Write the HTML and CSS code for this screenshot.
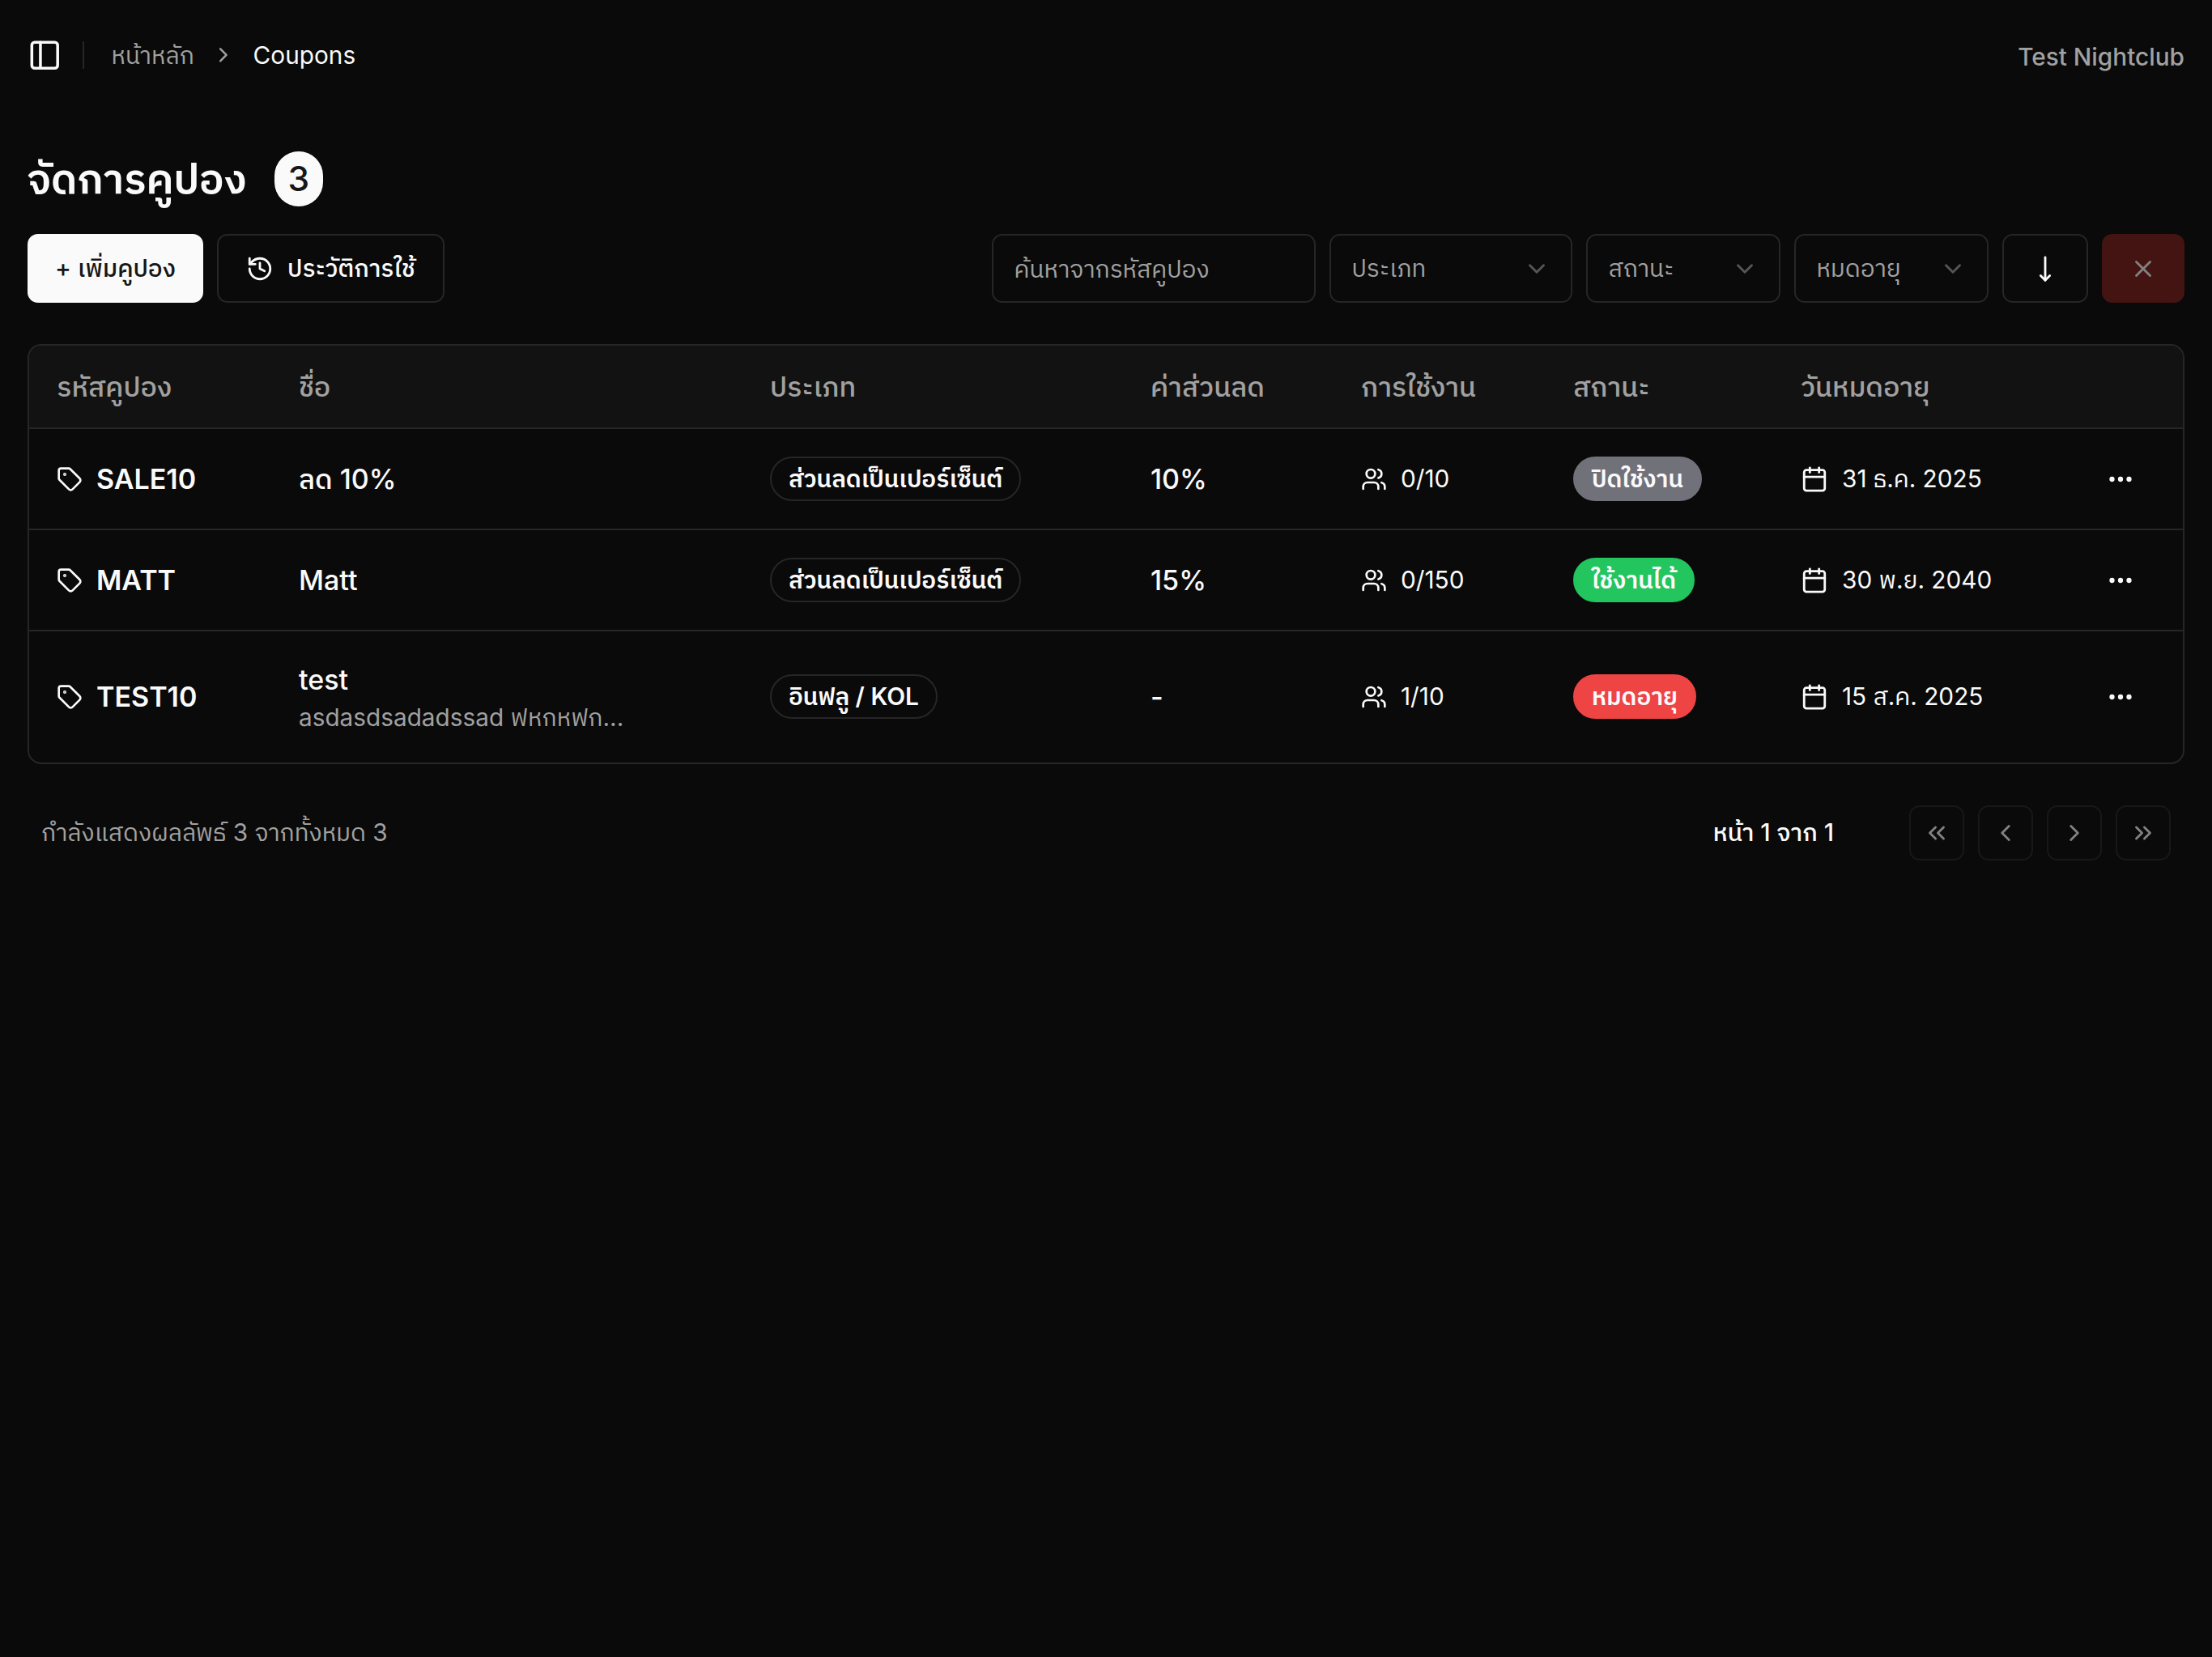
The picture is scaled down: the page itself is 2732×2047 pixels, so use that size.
FILE: index.html
```html
<!DOCTYPE html>
<html lang="th">
<head>
<meta charset="utf-8">
<title>Coupons</title>
<link rel="stylesheet" href="styles.css">
</head>
<body>
<svg class="sprite" aria-hidden="true">
  <symbol id="panel" viewBox="0 0 24 24"><rect width="18" height="18" x="3" y="3" rx="2"/><path d="M9 3v18"/></symbol>
  <symbol id="chev-right" viewBox="0 0 24 24"><path d="m9 18 6-6-6-6"/></symbol>
  <symbol id="chev-left" viewBox="0 0 24 24"><path d="m15 18-6-6 6-6"/></symbol>
  <symbol id="chev-down" viewBox="0 0 24 24"><path d="m6 9 6 6 6-6"/></symbol>
  <symbol id="chevs-left" viewBox="0 0 24 24"><path d="m11 17-5-5 5-5"/><path d="m18 17-5-5 5-5"/></symbol>
  <symbol id="chevs-right" viewBox="0 0 24 24"><path d="m6 17 5-5-5-5"/><path d="m13 17 5-5-5-5"/></symbol>
  <symbol id="history" viewBox="0 0 24 24"><path d="M3 12a9 9 0 1 0 9-9 9.75 9.75 0 0 0-6.74 2.74L3 8"/><path d="M3 3v5h5"/><path d="M12 7v5l4 2"/></symbol>
  <symbol id="move-down" viewBox="0 0 24 24"><path d="M8 18L12 22L16 18"/><path d="M12 2V22"/></symbol>
  <symbol id="x" viewBox="0 0 24 24"><path d="M18 6 6 18"/><path d="m6 6 12 12"/></symbol>
  <symbol id="tag" viewBox="0 0 24 24"><path d="M12.586 2.586A2 2 0 0 0 11.172 2H4a2 2 0 0 0-2 2v7.172a2 2 0 0 0 .586 1.414l8.704 8.704a2.426 2.426 0 0 0 3.42 0l6.58-6.58a2.426 2.426 0 0 0 0-3.42z"/><circle cx="7.5" cy="7.5" r=".5" fill="currentColor"/></symbol>
  <symbol id="users" viewBox="0 0 24 24"><path d="M16 21v-2a4 4 0 0 0-4-4H6a4 4 0 0 0-4 4v2"/><circle cx="9" cy="7" r="4"/><path d="M22 21v-2a4 4 0 0 0-3-3.87"/><path d="M16 3.13a4 4 0 0 1 0 7.75"/></symbol>
  <symbol id="calendar" viewBox="0 0 24 24"><path d="M8 2v4"/><path d="M16 2v4"/><rect width="18" height="18" x="3" y="4" rx="2"/><path d="M3 10h18"/></symbol>
  <symbol id="dots" viewBox="0 0 24 24"><circle cx="12" cy="12" r="1.1"/><circle cx="19" cy="12" r="1.1"/><circle cx="5" cy="12" r="1.1"/></symbol>
</svg>

<header class="topbar">
  <div class="crumbs">
    <svg class="icon icon-lg"><use href="#panel"/></svg>
    <span class="divider"></span>
    <nav class="trail">
      <span class="muted">หน้าหลัก</span>
      <svg class="icon icon-sm muted"><use href="#chev-right"/></svg>
      <span class="current">Coupons</span>
    </nav>
  </div>
  <span class="venue muted">Test Nightclub</span>
</header>

<main class="page">
  <h1 class="title"><span>จัดการคูปอง</span><span class="count">3</span></h1>

  <div class="toolbar">
    <div class="group">
      <button class="btn btn-primary">+ เพิ่มคูปอง</button>
      <button class="btn btn-outline"><svg class="icon"><use href="#history"/></svg><span>ประวัติการใช้</span></button>
    </div>
    <div class="group">
      <div class="field search"><span>ค้นหาจากรหัสคูปอง</span></div>
      <div class="field wide"><span>ประเภท</span><svg class="icon"><use href="#chev-down"/></svg></div>
      <div class="field"><span>สถานะ</span><svg class="icon"><use href="#chev-down"/></svg></div>
      <div class="field"><span>หมดอายุ</span><svg class="icon"><use href="#chev-down"/></svg></div>
      <button class="btn btn-outline"><svg class="icon"><use href="#move-down"/></svg></button>
      <button class="btn btn-danger"><svg class="icon"><use href="#x"/></svg></button>
    </div>
  </div>

  <div class="table-card">
    <table class="coupons">
      <colgroup><col class="c-code"><col class="c-name"><col class="c-type"><col class="c-value"><col class="c-usage"><col class="c-status"><col class="c-date"><col></colgroup>
      <thead>
        <tr>
          <th>รหัสคูปอง</th><th>ชื่อ</th><th>ประเภท</th><th>ค่าส่วนลด</th>
          <th>การใช้งาน</th><th>สถานะ</th><th>วันหมดอายุ</th><th></th>
        </tr>
      </thead>
      <tbody>
        <tr>
          <td><div class="cell code"><svg class="icon icon-md"><use href="#tag"/></svg><span>SALE10</span></div></td>
          <td><div class="name">ลด 10%</div></td>
          <td><span class="badge">ส่วนลดเป็นเปอร์เซ็นต์</span></td>
          <td class="value">10%</td>
          <td><div class="cell small"><svg class="icon icon-md"><use href="#users"/></svg><span>0/10</span></div></td>
          <td><span class="badge off">ปิดใช้งาน</span></td>
          <td><div class="cell small"><svg class="icon"><use href="#calendar"/></svg><span>31 ธ.ค. 2025</span></div></td>
          <td class="more"><svg class="icon"><use href="#dots"/></svg></td>
        </tr>
        <tr>
          <td><div class="cell code"><svg class="icon icon-md"><use href="#tag"/></svg><span>MATT</span></div></td>
          <td><div class="name">Matt</div></td>
          <td><span class="badge">ส่วนลดเป็นเปอร์เซ็นต์</span></td>
          <td class="value">15%</td>
          <td><div class="cell small"><svg class="icon icon-md"><use href="#users"/></svg><span>0/150</span></div></td>
          <td><span class="badge on">ใช้งานได้</span></td>
          <td><div class="cell small"><svg class="icon"><use href="#calendar"/></svg><span>30 พ.ย. 2040</span></div></td>
          <td class="more"><svg class="icon"><use href="#dots"/></svg></td>
        </tr>
        <tr class="tall">
          <td><div class="cell code"><svg class="icon icon-md"><use href="#tag"/></svg><span>TEST10</span></div></td>
          <td><div class="name">test</div><div class="desc muted">asdasdsadadssad ฟหกหฟก...</div></td>
          <td><span class="badge">อินฟลู / KOL</span></td>
          <td class="value">-</td>
          <td><div class="cell small"><svg class="icon icon-md"><use href="#users"/></svg><span>1/10</span></div></td>
          <td><span class="badge expired">หมดอายุ</span></td>
          <td><div class="cell small"><svg class="icon"><use href="#calendar"/></svg><span>15 ส.ค. 2025</span></div></td>
          <td class="more"><svg class="icon"><use href="#dots"/></svg></td>
        </tr>
      </tbody>
    </table>
  </div>

  <footer class="footer">
    <span class="summary muted">กำลังแสดงผลลัพธ์ 3 จากทั้งหมด 3</span>
    <div class="pager">
      <span class="page-no">หน้า 1 จาก 1</span>
      <div class="group">
        <button class="btn step"><svg class="icon"><use href="#chevs-left"/></svg></button>
        <button class="btn step"><svg class="icon"><use href="#chev-left"/></svg></button>
        <button class="btn step"><svg class="icon"><use href="#chev-right"/></svg></button>
        <button class="btn step"><svg class="icon"><use href="#chevs-right"/></svg></button>
      </div>
    </div>
  </footer>
</main>
</body>
</html>
```
FILE: styles.css
```css
html { font-size: 34px; }
* { box-sizing: border-box; }
body {
  margin: 0;
  background: #0a0a0a;
  color: #fafafa;
  font-family: Inter, "IBM Plex Sans Thai", "Noto Sans Thai", "Noto Sans", sans-serif;
  font-size: 0.875rem;
  line-height: 1.25rem;
}
.sprite { display: none; }
.muted { color: #a1a1a1; }
.icon {
  width: 1rem;
  height: 1rem;
  flex: none;
  fill: none;
  stroke: currentColor;
  stroke-width: 2;
  stroke-linecap: round;
  stroke-linejoin: round;
}
.icon-lg { width: 1.25rem; height: 1.25rem; }
.icon-md { width: 32px; height: 32px; }
.icon-sm { width: 0.875rem; height: 0.875rem; }

.topbar {
  display: flex;
  align-items: center;
  justify-content: space-between;
  height: 136px;
  padding: 0 34px;
}
.crumbs { display: flex; align-items: center; }
.divider { width: 2px; height: 1rem; margin: 0 1rem 0 25px; background: #262626; }
.trail { display: flex; align-items: center; gap: 21.5px; }
.current { margin-top: 1px; }
.venue { margin-top: 4px; font-weight: 500; }

.page { padding: 51px 34px 0; }
.title {
  display: flex;
  align-items: center;
  gap: 34px;
  height: 68px;
  margin: 0;
  font-size: 1.5rem;
  font-weight: 600;
  white-space: nowrap;
}
.count {
  padding: 0.125rem 0.5rem;
  border-radius: 999px;
  background: #fafafa;
  color: #171717;
  font-size: 1.25rem;
  line-height: 1.75rem;
  font-weight: 500;
}
.toolbar { display: flex; justify-content: space-between; margin-top: 34px; }
.group { display: flex; gap: 17px; }
.btn {
  display: flex;
  align-items: center;
  justify-content: center;
  gap: 17px;
  height: 2.5rem;
  padding: 0 1rem;
  border: 0;
  border-radius: 13px;
  background: none;
  color: #fafafa;
  font: inherit;
  font-weight: 500;
  white-space: nowrap;
}
.btn-primary { background: #fafafa; color: #171717; }
.btn-outline { border: 2px solid #262626; }
.btn-danger { background: #441413; color: #838080; }
.field {
  display: flex;
  align-items: center;
  justify-content: space-between;
  width: 240px;
  height: 2.5rem;
  padding: 0 0.75rem;
  border: 2px solid #262626;
  border-radius: 13px;
  color: #a1a1a1;
  white-space: nowrap;
}
.field .icon { opacity: 0.5; }
.search { width: 400px; padding-top: 2px; }
.wide { width: 300px; }

.table-card {
  margin-top: 51px;
  border: 2px solid #262626;
  border-radius: 17px;
  overflow: hidden;
}
.coupons {
  width: 100%;
  table-layout: fixed;
  border-collapse: separate;
  border-spacing: 0;
  font-size: 1rem;
  line-height: 1.5rem;
}
.c-code { width: 299px; }
.c-name { width: 582px; }
.c-type { width: 470px; }
.c-value { width: 260px; }
.c-usage { width: 262px; }
.c-status { width: 281px; }
.c-date { width: 332px; }
th, td { padding: 0 0 0 34px; text-align: left; vertical-align: middle; white-space: nowrap; }
th { height: 103px; background: #121212; border-bottom: 2px solid #262626; color: #a1a1a1; font-weight: 500; }
td { height: 125px; border-bottom: 2px solid #262626; }
.tall td { height: 162px; padding-bottom: 1px; border-bottom: 0; }
.cell { display: flex; align-items: center; gap: 17px; }
.code { font-weight: 600; }
.name, .value { font-weight: 500; }
.small, .desc { font-size: 0.875rem; line-height: 1.25rem; }
.badge {
  display: flex;
  align-items: center;
  width: max-content;
  height: 55px;
  padding: 0 21px;
  border: 2px solid #262626;
  border-radius: 999px;
  font-size: 0.875rem;
  font-weight: 600;
}
.off { background: #71717a; border-color: #71717a; }
.on { background: #22c55e; border-color: #22c55e; }
.expired { background: #ef4444; border-color: #ef4444; }
.more { padding-left: 79px; }
.more .icon { display: block; width: 36px; height: 36px; }

.footer { display: flex; align-items: center; justify-content: space-between; margin-top: 51px; padding: 0 17px; }
.summary, .page-no { padding-bottom: 2px; }
.pager { display: flex; align-items: center; gap: 93px; }
.page-no { font-weight: 500; }
.step { width: 2rem; height: 2rem; padding: 0; border: 2px solid #181818; color: #828282; }
```
